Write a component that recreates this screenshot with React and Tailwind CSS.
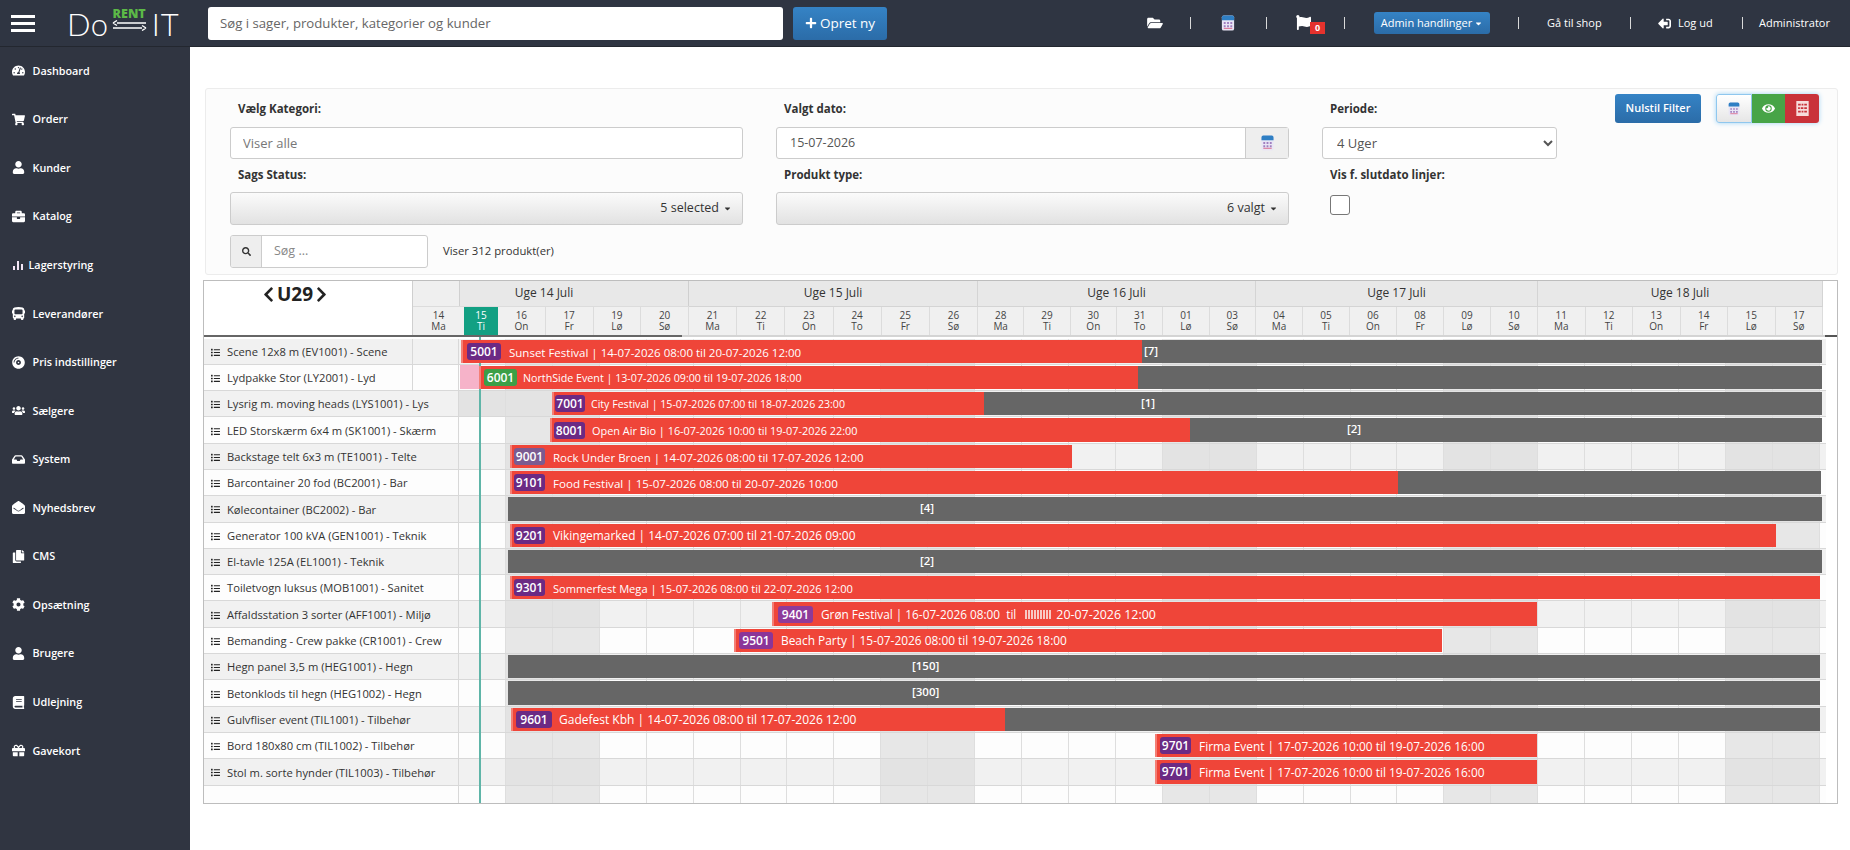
import React from 'react'
import {
  FaBook, FaBriefcase, FaBus, FaCaretDown, FaChevronLeft, FaChevronRight, FaCog, FaCopy, FaEnvelopeOpen, FaEye,
  FaFlag, FaFolderOpen, FaGift, FaInbox, FaList, FaPlus, FaSearch, FaShoppingCart, FaSignOutAlt, FaTachometerAlt,
  FaUser, FaUsers, FaCompactDisc,
} from 'react-icons/fa'

const TODAY_X = 459

const BarsIcon = () => (
  <svg viewBox="0 0 10 9" className="w-[10px] h-[9px] ml-[1px]">
    <path d="M0 5h2v4H0zM4 0h2v9H4zM8 3h2v6H8z" fill="#f3e6f5" />
  </svg>
)

const sideItems = [
  ['Dashboard', FaTachometerAlt], ['Orderr', FaShoppingCart], ['Kunder', FaUser], ['Katalog', FaBriefcase],
  ['Lagerstyring', BarsIcon], ['Leverandører', FaBus], ['Pris indstillinger', FaCompactDisc], ['Sælgere', FaUsers],
  ['System', FaInbox], ['Nyhedsbrev', FaEnvelopeOpen], ['CMS', FaCopy], ['Opsætning', FaCog],
  ['Brugere', FaUser], ['Udlejning', FaBook], ['Gavekort', FaGift],
]

const weeks = [
  { label: 'Uge 15 Juli', width: 289, days: [['21', 'Ma'], ['22', 'Ti'], ['23', 'On'], ['24', 'To'], ['25', 'Fr'], ['26', 'Sø']] },
  { label: 'Uge 16 Juli', width: 278, days: [['28', 'Ma'], ['29', 'Ti'], ['30', 'On'], ['31', 'To'], ['01', 'Lø'], ['03', 'Sø']] },
  { label: 'Uge 17 Juli', width: 282, days: [['04', 'Ma'], ['05', 'Ti'], ['06', 'On'], ['08', 'Fr'], ['09', 'Lø'], ['10', 'Sø']] },
  { label: 'Uge 18 Juli', width: 285, days: [['11', 'Ma'], ['12', 'Ti'], ['13', 'On'], ['14', 'Fr'], ['15', 'Lø'], ['17', 'Sø']] },
]

const purple = 'bg-[#6b2a84]'

// x values are page pixels, they get converted to timeline offsets in Row
const rows = [
  { name: 'Scene 12x8 m (EV1001) - Scene', split: true, bars: [
    { from: 461, to: 1142, badge: '5001', pad: 6, bw: 34, gap: 8, text: 'Sunset Festival | 14-07-2026 08:00 til 20-07-2026 12:00' },
    { from: 1142, to: 1822, dark: true, label: '[7]', labelX: 1144 } ] },
  { name: 'Lydpakke Stor (LY2001) - Lyd', split: true, bars: [
    { from: 460, to: 479, pink: true },
    { from: 479, to: 1138, badge: '6001', pad: 5, bw: 33, gap: 6, size: 10.7, color: 'bg-[#3c9f47]', text: 'NorthSide Event | 13-07-2026 09:00 til 19-07-2026 18:00' },
    { from: 1138, to: 1822, dark: true } ] },
  { name: 'Lysrig m. moving heads (LYS1001) - Lys', bars: [
    { from: 552, to: 984, badge: '7001', pad: 3, bw: 30, gap: 6, size: 10.6, text: 'City Festival | 15-07-2026 07:00 til 18-07-2026 23:00' },
    { from: 984, to: 1822, dark: true, label: '[1]', labelX: 1141 } ] },
  { name: 'LED Storskærm 6x4 m (SK1001) - Skærm', bars: [
    { from: 550, to: 1190, badge: '8001', pad: 4, bw: 31, gap: 7, size: 10.9, text: 'Open Air Bio | 16-07-2026 10:00 til 19-07-2026 22:00' },
    { from: 1190, to: 1822, dark: true, label: '[2]', labelX: 1347 } ] },
  { name: 'Backstage telt 6x3 m (TE1001) - Telte', bars: [
    { from: 510, to: 1072, badge: '9001', pad: 4, bw: 31, gap: 8, color: 'bg-[#7b5b91]', text: 'Rock Under Broen | 14-07-2026 08:00 til 17-07-2026 12:00' } ] },
  { name: 'Barcontainer 20 fod (BC2001) - Bar', bars: [
    { from: 510, to: 1398, badge: '9101', pad: 4, bw: 31, gap: 8, size: 11.6, text: 'Food Festival | 15-07-2026 08:00 til 20-07-2026 10:00' },
    { from: 1398, to: 1821, dark: true } ] },
  { name: 'Kølecontainer (BC2002) - Bar', bars: [{ from: 508, to: 1822, dark: true, label: '[4]', labelX: 920 }] },
  { name: 'Generator 100 kVA (GEN1001) - Teknik', bars: [
    { from: 510, to: 1776, badge: '9201', pad: 4, bw: 31, gap: 8, size: 11.9, text: 'Vikingemarked | 14-07-2026 07:00 til 21-07-2026 09:00' } ] },
  { name: 'El-tavle 125A (EL1001) - Teknik', bars: [{ from: 508, to: 1822, dark: true, label: '[2]', labelX: 920 }] },
  { name: 'Toiletvogn luksus (MOB1001) - Sanitet', bars: [
    { from: 510, to: 1820, badge: '9301', pad: 4, bw: 31, gap: 8, size: 11.1, text: 'Sommerfest Mega | 15-07-2026 08:00 til 22-07-2026 12:00' } ] },
  { name: 'Affaldsstation 3 sorter (AFF1001) - Miljø', bars: [
    { from: 772, to: 1537, badge: '9401', pad: 6, bw: 35, gap: 8, size: 11.8, color: 'bg-[#8e3a9a]', text: 'Grøn Festival | 16-07-2026 08:00  til', garbled: true, tail: '20-07-2026 12:00' } ] },
  { name: 'Bemanding - Crew pakke (CR1001) - Crew', bars: [
    { from: 734, to: 1442, badge: '9501', pad: 5, bw: 34, gap: 8, size: 11.9, color: 'bg-[#8b3598]', text: 'Beach Party | 15-07-2026 08:00 til 19-07-2026 18:00' } ] },
  { name: 'Hegn panel 3,5 m (HEG1001) - Hegn', bars: [{ from: 508, to: 1820, dark: true, label: '[150]', labelX: 912 }] },
  { name: 'Betonklods til hegn (HEG1002) - Hegn', bars: [{ from: 508, to: 1820, dark: true, label: '[300]', labelX: 912 }] },
  { name: 'Gulvfliser event (TIL1001) - Tilbehør', bars: [
    { from: 511, to: 1005, badge: '9601', pad: 5, bw: 36, gap: 7, size: 12, text: 'Gadefest Kbh | 14-07-2026 08:00 til 17-07-2026 12:00' },
    { from: 1005, to: 1820, dark: true } ] },
  { name: 'Bord 180x80 cm (TIL1002) - Tilbehør', bars: [
    { from: 1155, to: 1537, badge: '9701', pad: 5, bw: 31, gap: 8, size: 11.9, text: 'Firma Event | 17-07-2026 10:00 til 19-07-2026 16:00' } ] },
  { name: 'Stol m. sorte hynder (TIL1003) - Tilbehør', bars: [
    { from: 1155, to: 1537, badge: '9701', pad: 5, bw: 31, gap: 8, size: 11.9, text: 'Firma Event | 17-07-2026 10:00 til 19-07-2026 16:00' } ] },
]

const weekendCols = [1, 2, 9, 10, 15, 16, 21, 22, 27, 28]
const cols = Array.from({ length: 29 }, (_, i) => i)

const CalendarIcon = ({ className }) => (
  <svg viewBox="0 0 14 17" className={className}>
    <rect x="0.5" y="0.5" width="13" height="16" rx="2" fill="#e9e6f5" />
    <path d="M0.5 5.5V2.5a2 2 0 0 1 2-2h9a2 2 0 0 1 2 2v3z" fill="#2f7fc4" />
    <path d="M2.5 7.5h2v2h-2zM6 7.5h2v2H6zM9.5 7.5h2v2h-2zM2.5 11h2v2h-2zM6 11h2v2H6zM9.5 11h2v2h-2z" fill="#a07fc0" />
    <path d="M2.5 14.2h9" stroke="#d9688a" strokeWidth="1" />
  </svg>
)

const PixelCalendar = () => (
  <svg viewBox="0 0 14 17" className="w-[13px] h-[15px]">
    <rect width="14" height="17" fill="#f6dcdc" />
    <path d="M2 3h3v2H2zM6 3h2v2H6zM9 3h3v2H9zM2 7h2v2H2zM5 7h3v2H5zM9 7h3v2H9zM2 11h3v2H2zM6 11h2v2H6zM9 11h3v2H9z" fill="#c9323a" />
  </svg>
)

const Logo = () => (
  <div className="flex items-start w-[108px] h-[30px] text-white font-['Lato',sans-serif] font-light leading-none">
    <span className="text-[31px] mt-[1px] tracking-[0.5px]">Do</span>
    <div className="w-[35px] ml-[3px] flex flex-col items-center">
      <span className="text-[12.5px] font-['Open_Sans',sans-serif] font-extrabold text-[#5cb947] leading-[12px]">RENT</span>
      <svg viewBox="0 0 35 11" className="w-[35px] h-[11px]">
        <path d="M5 3h29M1 3l4-2.5M1 3l4 2.5M1 8h29M34 8l-4-2.5M34 8l-4 2.5" stroke="#fff" strokeWidth="1.4" fill="none" />
      </svg>
    </div>
    <span className="text-[31px] mt-[1px] ml-[5px] tracking-[1px]">IT</span>
  </div>
)

const Sep = ({ className }) => <span className={`w-[1px] h-[12px] bg-[#d9d9d9] ${className}`} />

const Header = () => (
  <header className="h-[47px] shrink-0 bg-[#2f3542] border-b border-[#23272f] flex items-center text-white text-[11px] font-medium whitespace-nowrap">
    <div className="ml-[11px] w-[24px] flex flex-col gap-[4px]">
      <span className="h-[3px] bg-white" />
      <span className="h-[3px] bg-white" />
      <span className="h-[3px] bg-white" />
    </div>
    <div className="ml-[32px]"><Logo /></div>
    <input
      placeholder="Søg i sager, produkter, kategorier og kunder"
      className="ml-[33px] w-[575px] h-[33px] rounded-[3px] bg-white px-3 text-[13.2px] font-normal text-[#555] placeholder:text-[#666] outline-none"
    />
    <button className="ml-[10px] w-[94px] h-[33px] rounded-[3px] bg-gradient-to-b from-[#3583c5] to-[#2b6ca8] text-[13.5px] font-normal flex items-center justify-center gap-[3px]">
      <FaPlus className="w-[12px] h-[12px]" /> Opret ny
    </button>
    <div className="ml-auto pr-[19px] flex items-center">
      <FaFolderOpen className="w-[16px] h-[14px]" />
      <Sep className="ml-[27px]" />
      <CalendarIcon className="ml-[30px] w-[14px] h-[16px]" />
      <Sep className="ml-[31px]" />
      <div className="relative ml-[29px] w-[15px] h-[16px]">
        <FaFlag className="w-[15px] h-[15px]" />
        <span className="absolute left-[14px] top-[7px] w-[15px] h-[12px] bg-[#e5322d] text-[9px] font-bold leading-[12px] text-center">0</span>
      </div>
      <Sep className="ml-[33px]" />
      <button className="ml-[29px] w-[116px] h-[22px] rounded-[3px] bg-gradient-to-b from-[#3583c5] to-[#2b6ca8] text-[11px] flex items-center justify-center gap-[2px]">
        Admin handlinger <FaCaretDown className="w-[9px] h-[9px]" />
      </button>
      <Sep className="ml-[28px]" />
      <span className="ml-[28px] w-[56px]">Gå til shop</span>
      <Sep className="ml-[27px]" />
      <FaSignOutAlt className="ml-[27px] w-[13px] h-[13px] -scale-x-100" />
      <span className="ml-[7px] w-[36px]">Log ud</span>
      <Sep className="ml-[28px]" />
      <span className="ml-[16px] w-[72px]">Administrator</span>
    </div>
  </header>
)

const Sidebar = () => (
  <aside className="w-[190px] shrink-0 bg-[#303541] text-white text-[10.8px] font-semibold">
    <div className="-mt-[0.5px]">
      {sideItems.map(([label, Icon]) => (
        <div key={label} className="h-[48.57px] flex items-center pl-[12px]">
          <span className="w-[20.5px] shrink-0">
            <Icon className="w-[13px] h-[13px]" />
          </span>
          <span className={label === 'Lagerstyring' ? '-ml-[4px]' : ''}>{label}</span>
        </div>
      ))}
    </div>
  </aside>
)

const Label = ({ children, className = '' }) => (
  <div className={`h-[16px] pl-[8px] text-[11.5px] font-bold leading-[16px] text-[#333] ${className}`}>{children}</div>
)

const MultiButton = ({ children }) => (
  <button className="w-full h-[33px] rounded-[3px] border border-[#ccc] bg-gradient-to-b from-[#fbfbfb] to-[#e2e2e2] flex items-center justify-end gap-[4px] pr-[10px] text-[12.5px] text-[#333]">
    {children} <FaCaretDown className="w-[9px] h-[9px]" />
  </button>
)

const Filters = () => (
  <section className="ml-[2px] h-[187px] bg-[#fcfcfc] border border-[#ececec] rounded-[3px] flex pl-[24px] pr-[18px]">
    <div className="pt-[12px] grid grid-cols-[513px_513px_235px] gap-x-[33px] content-start">
      <div>
        <Label>Vælg Kategori:</Label>
        <input
          placeholder="Viser alle"
          className="mt-[10px] w-full h-[32px] rounded-[3px] border border-[#ccc] bg-white px-3 text-[13px] placeholder:text-[#777] outline-none"
        />
        <Label className="mt-[8px]">Sags Status:</Label>
        <div className="mt-[9px]"><MultiButton>5 selected</MultiButton></div>
        <div className="mt-[10px] flex items-center">
          <div className="w-[198px] h-[33px] rounded-[3px] border border-[#ccc] flex overflow-hidden bg-white">
            <span className="w-[31px] bg-[#eee] border-r border-[#ccc] flex items-center justify-center">
              <FaSearch className="w-[9px] h-[9px] text-[#333]" />
            </span>
            <input placeholder="Søg ..." className="w-0 flex-1 px-3 text-[12.5px] placeholder:text-[#888] outline-none" />
          </div>
          <span className="ml-[15px] text-[11.3px] text-[#333]">Viser 312 produkt(er)</span>
        </div>
      </div>
      <div>
        <Label>Valgt dato:</Label>
        <div className="mt-[10px] h-[32px] rounded-[3px] border border-[#ccc] bg-white flex">
          <input readOnly value="15-07-2026" className="w-0 flex-1 px-[13px] text-[12.5px] text-[#555] outline-none" />
          <span className="w-[43px] bg-[#eee] border-l border-[#ccc] flex items-center justify-center">
            <CalendarIcon className="w-[13px] h-[16px]" />
          </span>
        </div>
        <Label className="mt-[8px]">Produkt type:</Label>
        <div className="mt-[9px]"><MultiButton>6 valgt</MultiButton></div>
      </div>
      <div>
        <Label>Periode:</Label>
        <select className="mt-[10px] w-full h-[32px] rounded-[3px] border border-[#ccc] bg-white px-[10px] text-[13px] text-[#555] outline-none">
          <option>4 Uger</option>
        </select>
        <Label className="mt-[8px]">Vis f. slutdato linjer:</Label>
        <input type="checkbox" className="block mt-[12px] ml-[8px] w-[20px] h-[20px] appearance-none rounded-[3px] border border-[#777] bg-white" />
      </div>
    </div>
    <div className="ml-auto pt-[5px] flex items-start">
      <button className="w-[86px] h-[29px] rounded-[3px] bg-gradient-to-b from-[#3583c5] to-[#2b6ca8] text-white text-[11px] font-semibold">Nulstil Filter</button>
      <div className="ml-[15px] flex h-[29px] rounded-[3px] shadow-[0_0_5px_#9fd3f5]">
        <span className="w-[36px] bg-gradient-to-b from-white to-[#e6e6e6] border border-[#8fc7ee] rounded-l-[3px] flex items-center justify-center">
          <CalendarIcon className="w-[12px] h-[14px]" />
        </span>
        <span className="w-[33px] bg-[#47a447] flex items-center justify-center">
          <FaEye className="w-[13px] h-[13px] text-white" />
        </span>
        <span className="w-[34px] bg-[#c9323a] rounded-r-[3px] flex items-center justify-center">
          <PixelCalendar />
        </span>
      </div>
    </div>
  </section>
)

const DayCell = ({ day, className = '' }) => (
  <div className={`flex-1 flex flex-col items-center justify-center border-r border-[#dcdcdc] text-[10px] leading-[11px] text-[#444] ${className}`}>
    <span>{day[0]}</span>
    <span>{day[1]}</span>
  </div>
)

const GanttHeader = () => (
  <div className="flex h-[56px] border-b-2 border-[#d4d4d4] relative">
    <span className="absolute left-0 -bottom-[2px] w-[478px] h-[2px] bg-[#666]" />
    <span className="absolute right-0 -bottom-[2px] w-[12px] h-[2px] bg-[#555]" />
    <div className="w-[209px] shrink-0 pt-[3px] pl-[58px] border-r border-[#cfcfcf] flex items-start gap-[2px] text-[19px] font-bold leading-[20px] text-[#222]">
      <FaChevronLeft className="w-[13px] h-[17px] mt-[2px]" />
      <span>U29</span>
      <FaChevronRight className="w-[13px] h-[17px] mt-[2px]" />
    </div>
    <div className="w-[276px] shrink-0 flex flex-col">
      <div className="h-[26px] flex border-b border-[#dcdcdc]">
        <div className="w-[47px] bg-[#efefef] border-r border-[#d0d0d0]" />
        <div className="flex-1 bg-[#e8e8e8] border-r border-[#cfcfcf] pr-[60px] text-center text-[12px] leading-[24px] text-[#333]">Uge 14 Juli</div>
      </div>
      <div className="flex-1 flex bg-[#f0f0f0]">
        <DayCell day={['14', 'Ma']} className="!flex-none w-[51px] border-r-0" />
        <DayCell day={['15', 'Ti']} className="!flex-none w-[34px] !bg-[#12a083] !text-white border-r-0" />
        <DayCell day={['16', 'On']} />
        <DayCell day={['17', 'Fr']} />
        <DayCell day={['19', 'Lø']} />
        <DayCell day={['20', 'Sø']} />
      </div>
    </div>
    {weeks.map((week) => (
      <div key={week.label} className="shrink-0 flex flex-col" style={{ width: week.width }}>
        <div className="h-[26px] bg-[#e8e8e8] border-b border-r border-[#d4d4d4] text-center text-[12px] leading-[24px] text-[#333]">{week.label}</div>
        <div className="flex-1 flex bg-[#f0f0f0]">
          {week.days.map((day) => <DayCell key={day[0] + day[1]} day={day} />)}
        </div>
      </div>
    ))}
  </div>
)

const Bar = ({ bar }) => {
  const style = { left: bar.from - TODAY_X, width: bar.to - bar.from }
  if (bar.dark) {
    return (
      <div className="absolute z-10 top-[1px] bottom-[1px] bg-[#666]" style={style}>
        {bar.label && (
          <span className="absolute top-0 text-[11.5px] font-semibold leading-[22px] text-white" style={{ left: bar.labelX - bar.from }}>{bar.label}</span>
        )}
      </div>
    )
  }
  if (bar.pink) return <div className="absolute z-10 top-0 bottom-[1px] bg-[#f6b3c9]" style={style} />
  return (
    <div
      className="absolute z-10 top-[1px] bottom-[1px] bg-[#ef4539] border-l-2 border-[#f47f75] flex items-center text-white whitespace-pre overflow-hidden"
      style={{ ...style, paddingLeft: bar.pad - 2, fontSize: bar.size || 11.5 }}
    >
      <span
        className={`h-[17px] shrink-0 rounded-[3px] text-center text-[12px] font-semibold leading-[17px] ${bar.color || purple}`}
        style={{ width: bar.bw }}
      >
        {bar.badge}
      </span>
      <span className="pt-[2px]" style={{ marginLeft: bar.gap }}>{bar.text}</span>
      {bar.garbled && (
        <>
          <span className="ml-[9px] w-[27px] h-[9px] bg-[repeating-linear-gradient(90deg,#f8c9c4_0,#f8c9c4_2px,#ef4539_2px,#ef4539_3px)]" />
          <span className="ml-[4px] pt-[2px] text-[12.4px]">{bar.tail}</span>
        </>
      )}
    </div>
  )
}

const Row = ({ row, index }) => {
  const even = index % 2 === 0
  const bg = even ? 'bg-[#f1f1f1]' : 'bg-[#fdfdfd]'
  return (
    <div className="h-[26.3px] flex">
      <div className={`w-[255px] shrink-0 flex border-b border-r border-[#d8d8d8] ${bg}`}>
        <div className={`${row.split ? 'w-[209px] border-r border-[#d8d8d8]' : 'w-full'} shrink-0 flex items-center pl-[7px] pt-[2px] text-[11.2px] text-[#333] whitespace-nowrap`}>
          {row.name && <FaList className="w-[9px] h-[9px] mr-[7px] text-[#222]" />}
          {row.name}
        </div>
      </div>
      <div className={`w-[1367px] shrink-0 relative flex border-b border-[#d8d8d8] ${bg}`}>
        {cols.map((col) => (
          <div
            key={col}
            className={`w-[46.93px] shrink-0 border-r border-[#dedede] ${
              weekendCols.includes(col) || (index === 2 && col === 0) ? (even ? 'bg-[#e3e3e3]' : 'bg-[#e7e7e7]') : ''
            }`}
          />
        ))}
        {row.bars.map((bar, i) => <Bar key={i} bar={bar} />)}
      </div>
    </div>
  )
}

const Gantt = () => (
  <section className="mt-[5px] h-[524px] relative overflow-hidden border border-[#bdbdbd] bg-white">
    <GanttHeader />
    <div className="mt-[1.5px]">
      {rows.map((row, i) => <Row key={row.name} row={row} index={i} />)}
      <Row row={{ name: '', bars: [] }} index={17} />
    </div>
    <span className="absolute left-[274.5px] top-[56px] bottom-0 w-[2px] bg-[#5fb5a8]" />
  </section>
)

const App = () => (
  <div className="w-[1850px] h-[850px] overflow-hidden flex flex-col bg-white font-['Open_Sans',sans-serif]">
    <Header />
    <div className="flex-1 flex min-h-0">
      <Sidebar />
      <main className="flex-1 pl-[13px] pr-[12px] pt-[41px]">
        <Filters />
        <Gantt />
      </main>
    </div>
  </div>
)

export default App
